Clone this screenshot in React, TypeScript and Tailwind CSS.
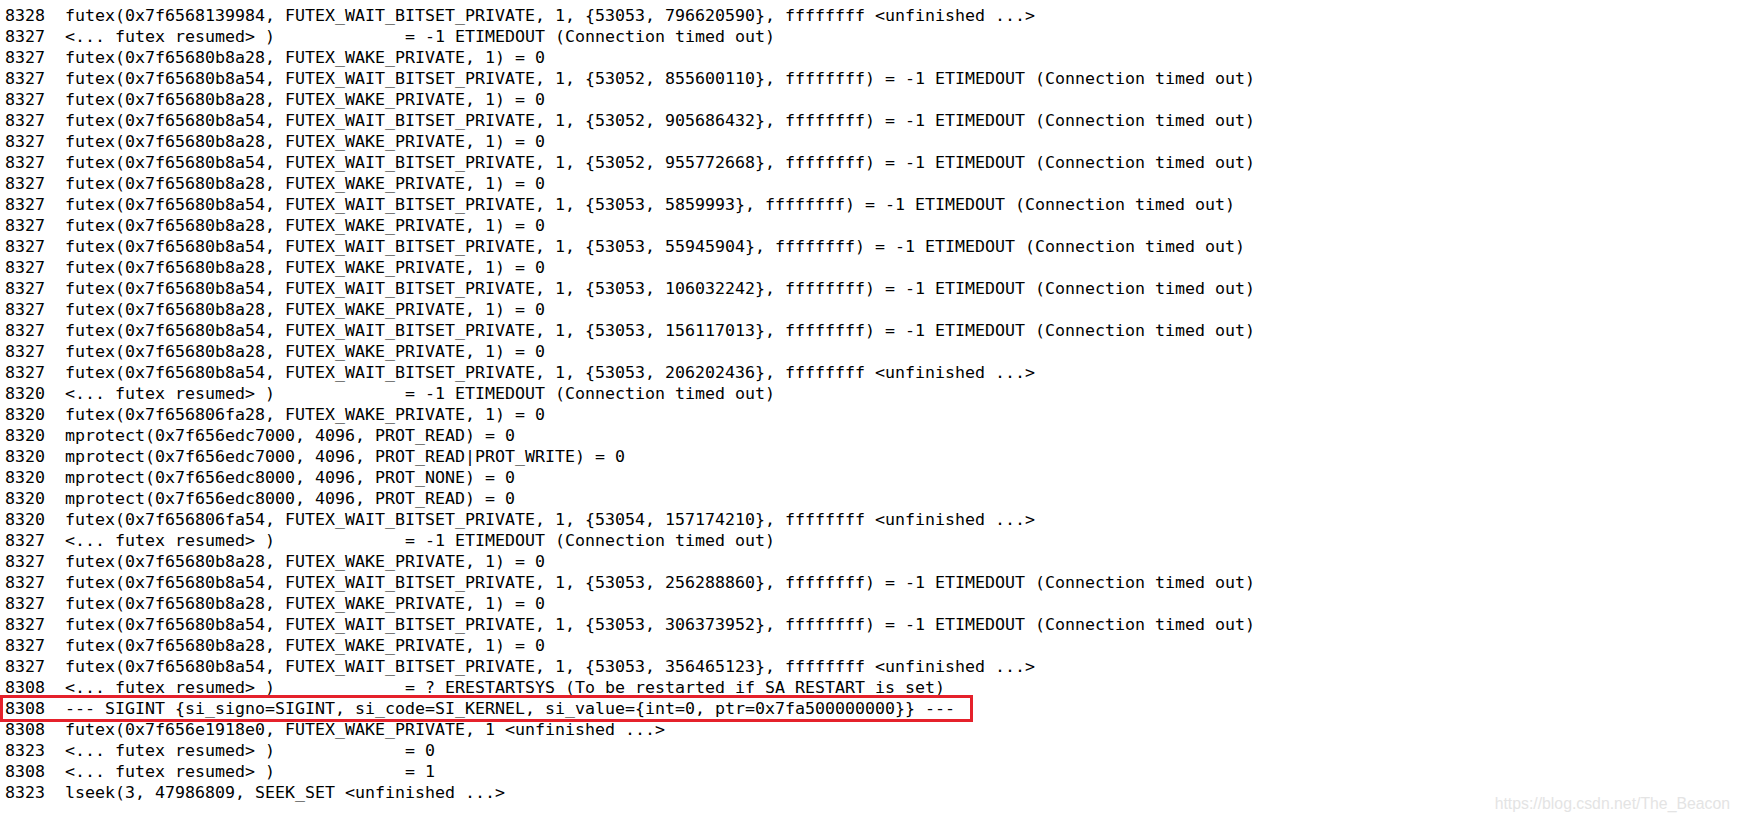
import React from "react";

const WAKE = "futex(0x7f65680b8a28, FUTEX_WAKE_PRIVATE, 1) = 0";
const wait = (a: string, b: string) =>
  `futex(0x7f65680b8a54, FUTEX_WAIT_BITSET_PRIVATE, 1, {${a}, ${b}}, ffffffff) = -1 ETIMEDOUT (Connection timed out)`;
const RES = "<... futex resumed> )             ";

const lines: [string, string][] = [
  ["8328", "futex(0x7f6568139984, FUTEX_WAIT_BITSET_PRIVATE, 1, {53053, 796620590}, ffffffff <unfinished ...>"],
  ["8327", RES + "= -1 ETIMEDOUT (Connection timed out)"],
  ["8327", WAKE],
  ["8327", wait("53052", "855600110")],
  ["8327", WAKE],
  ["8327", wait("53052", "905686432")],
  ["8327", WAKE],
  ["8327", wait("53052", "955772668")],
  ["8327", WAKE],
  ["8327", wait("53053", "5859993")],
  ["8327", WAKE],
  ["8327", wait("53053", "55945904")],
  ["8327", WAKE],
  ["8327", wait("53053", "106032242")],
  ["8327", WAKE],
  ["8327", wait("53053", "156117013")],
  ["8327", WAKE],
  ["8327", "futex(0x7f65680b8a54, FUTEX_WAIT_BITSET_PRIVATE, 1, {53053, 206202436}, ffffffff <unfinished ...>"],
  ["8320", RES + "= -1 ETIMEDOUT (Connection timed out)"],
  ["8320", "futex(0x7f656806fa28, FUTEX_WAKE_PRIVATE, 1) = 0"],
  ["8320", "mprotect(0x7f656edc7000, 4096, PROT_READ) = 0"],
  ["8320", "mprotect(0x7f656edc7000, 4096, PROT_READ|PROT_WRITE) = 0"],
  ["8320", "mprotect(0x7f656edc8000, 4096, PROT_NONE) = 0"],
  ["8320", "mprotect(0x7f656edc8000, 4096, PROT_READ) = 0"],
  ["8320", "futex(0x7f656806fa54, FUTEX_WAIT_BITSET_PRIVATE, 1, {53054, 157174210}, ffffffff <unfinished ...>"],
  ["8327", RES + "= -1 ETIMEDOUT (Connection timed out)"],
  ["8327", WAKE],
  ["8327", wait("53053", "256288860")],
  ["8327", WAKE],
  ["8327", wait("53053", "306373952")],
  ["8327", WAKE],
  ["8327", "futex(0x7f65680b8a54, FUTEX_WAIT_BITSET_PRIVATE, 1, {53053, 356465123}, ffffffff <unfinished ...>"],
  ["8308", RES + "= ? ERESTARTSYS (To be restarted if SA_RESTART is set)"],
  ["8308", "--- SIGINT {si_signo=SIGINT, si_code=SI_KERNEL, si_value={int=0, ptr=0x7fa500000000}} ---"],
  ["8308", "futex(0x7f656e1918e0, FUTEX_WAKE_PRIVATE, 1 <unfinished ...>"],
  ["8323", RES + "= 0"],
  ["8308", RES + "= 1"],
  ["8323", "lseek(3, 47986809, SEEK_SET <unfinished ...>"],
];

export default function App() {
  return (
    <div className="relative w-[1739px] h-[821px] bg-white overflow-hidden">
      <div
        className="flex flex-col pt-[5px] pl-[5px] text-black text-[16.63px] leading-[21px] whitespace-pre"
        style={{ fontFamily: '"DejaVu Sans Mono", monospace' }}
      >
        {lines.map(([pid, text], i) => (
          <div key={i}>{pid + "  " + text}</div>
        ))}
      </div>
      <div className="absolute left-0 top-[695px] w-[973px] h-[27px] border-[3px] border-[#e5212b]" />
      <div
        className="absolute right-[9px] bottom-[8px] text-[15.8px] leading-[18px] text-[#e4e4e4]"
        style={{ fontFamily: '"Liberation Sans", Arial, sans-serif' }}
      >
        https://blog.csdn.net/The_Beacon
      </div>
    </div>
  );
}
